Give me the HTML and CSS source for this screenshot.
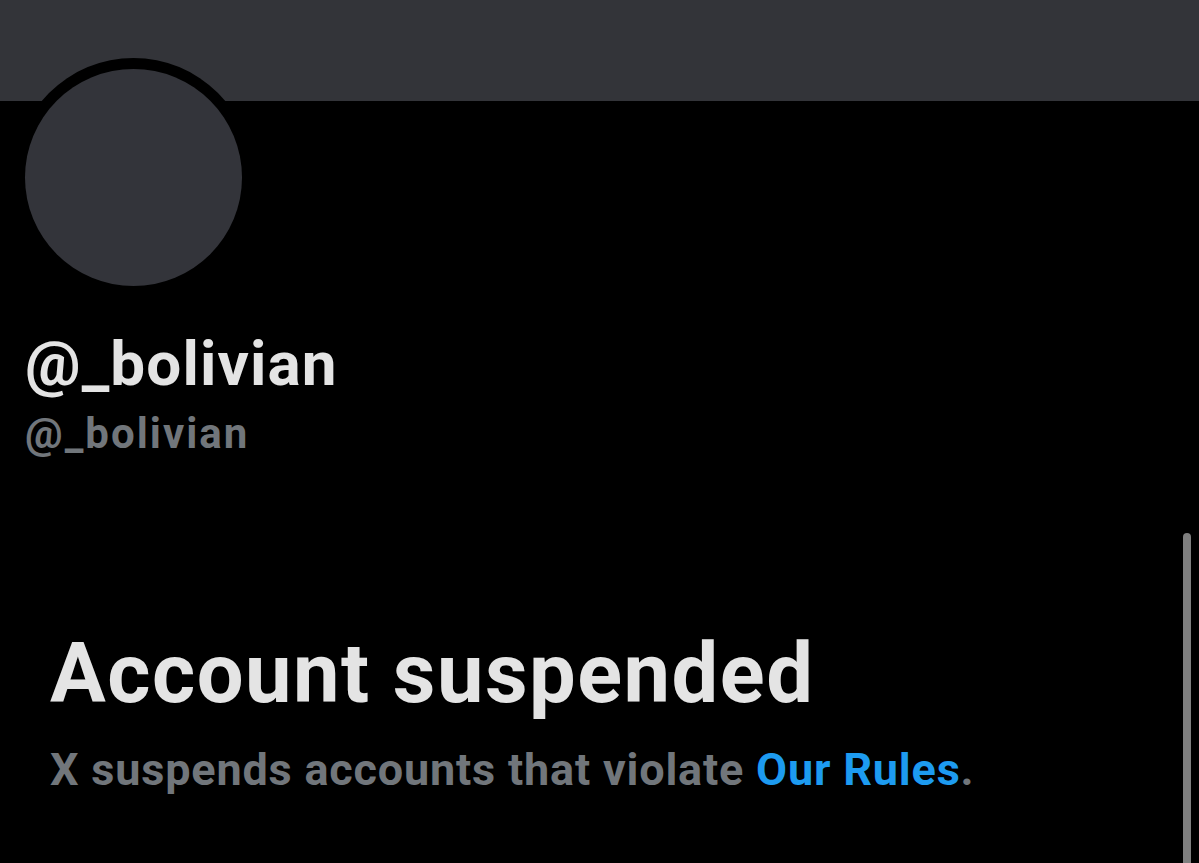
FILE: index.html
```html
<!DOCTYPE html>
<html lang="en">
<head>
<meta charset="utf-8">
<title>@_bolivian</title>
<link rel="stylesheet" href="styles.css">
</head>
<body>
  <div class="banner"></div>
  <main class="profile">
    <div class="avatar-ring"><div class="avatar"></div></div>
    <div class="names">
      <h1 class="display-name">@_bolivian</h1>
      <div class="handle">@_bolivian</div>
    </div>
    <section class="notice">
      <h2 class="notice-title">Account suspended</h2>
      <p class="notice-text">X suspends accounts that violate <a class="rules-link" href="#">Our Rules</a>.</p>
    </section>
  </main>
  <div class="scrollbar"></div>
</body>
</html>
```

FILE: styles.css
```css
html, body {
  margin: 0;
  padding: 0;
  background: #000;
  height: 100%;
  overflow: hidden;
}

body {
  font-family: Roboto, "Noto Sans", sans-serif;
  font-weight: 700;
  position: relative;
}

.banner {
  height: 101px;
  background: #333439;
}

.profile {
  display: flex;
  flex-direction: column;
}

.avatar-ring {
  width: 239px;
  height: 239px;
  margin: -43px 0 0 14px;
  border-radius: 50%;
  background: #000;
  display: flex;
  align-items: center;
  justify-content: center;
}

.avatar {
  width: 217px;
  height: 217px;
  border-radius: 50%;
  background: #33343a;
}

.names {
  padding-left: 25px;
  margin-top: 31px;
}

.display-name {
  margin: 0;
  font-size: 62px;
  line-height: 72px;
  font-weight: 700;
  letter-spacing: 1.1px;
  color: #e4e4e4;
}

.handle {
  margin-top: 9px;
  font-size: 42px;
  line-height: 50px;
  letter-spacing: 2px;
  color: #71767b;
}

.notice {
  padding-left: 50px;
  margin-top: 167px;
}

.notice-title {
  margin: 0;
  font-size: 83px;
  line-height: 96px;
  font-weight: 700;
  letter-spacing: 1.5px;
  color: #e4e4e4;
}

.notice-text {
  margin: 22px 0 0;
  font-size: 45px;
  line-height: 52px;
  letter-spacing: 0.8px;
  color: #71767b;
}

.rules-link {
  color: #1d9bf0;
  text-decoration: none;
}

.scrollbar {
  position: absolute;
  right: 8px;
  top: 533px;
  bottom: 0;
  width: 8px;
  border-radius: 4px 4px 0 0;
  background: #7f7f7f;
}
```
